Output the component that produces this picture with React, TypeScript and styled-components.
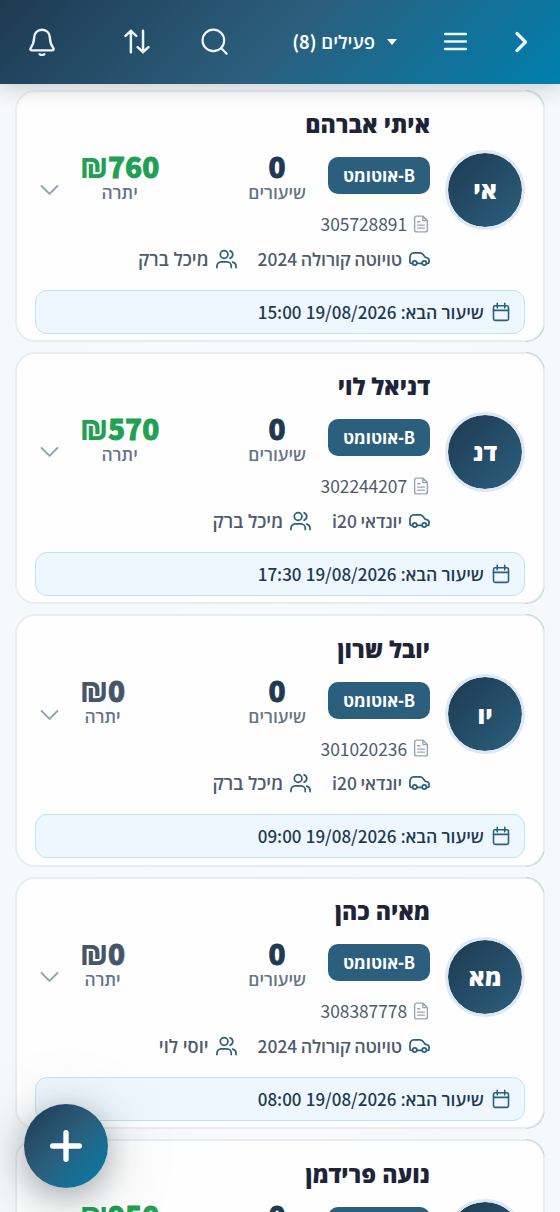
import React from "react";
import styled, { createGlobalStyle } from "styled-components";

const hebrew = `"Open Sans", "Noto Sans", sans-serif`;
const latin = `"Noto Sans CJK SC", "Open Sans", sans-serif`;

const GlobalStyle = createGlobalStyle`
  * { box-sizing: border-box; }
  html, body { margin: 0; height: 100%; overflow: hidden; }
  body { background: #f6fafc; font-family: ${hebrew}; color: #1e293b; }
`;

const Screen = styled.div`
  position: relative;
  height: 1212px;
  width: 560px;
  overflow: hidden;
  display: flex;
  flex-direction: column;
  background: linear-gradient(90deg, #f5f9fb, #f8fafc 50%, #f5f9fb);
`;

const Header = styled.header`
  position: relative;
  z-index: 1;
  flex: none;
  height: 83.5px;
  display: flex;
  align-items: center;
  padding: 0 27px 0 28px;
  color: #fff;
  background: linear-gradient(135deg, #1e3a52 0%, #2b5f7d 50%, #007fae 100%);
  box-shadow: 0 4px 20px rgba(15, 23, 42, 0.2);
`;

const IconButton = styled.button<{ $gap?: number }>`
  display: flex;
  padding: 0;
  border: 0;
  background: none;
  color: #eef6fc;
  margin-inline-start: ${(p) => p.$gap ?? 0}px;
`;

const Filter = styled.div`
  display: flex;
  align-items: center;
  gap: 12px;
  width: 107px;
  margin-inline-start: 46px;
  font-size: 18.5px;
  font-weight: 650;
  white-space: nowrap;
`;

const Num = styled.bdi<{ $size: number; $weight?: number; $track?: number }>`
  font-family: ${latin};
  font-size: ${(p) => p.$size}px;
  font-weight: ${(p) => p.$weight ?? 500};
  letter-spacing: ${(p) => p.$track ?? 0}px;
  line-height: 1;
`;

const Figure = styled(Num)`
  -webkit-text-stroke: 0.8px currentColor;
`;

const Shekel = styled.span`
  -webkit-text-stroke: 0;
`;

const List = styled.main`
  flex: 1;
  min-height: 0;
  display: flex;
  flex-direction: column;
  gap: 10px;
  padding: 6px 15px 0;
`;

const Card = styled.article`
  position: relative;
  flex: none;
  height: 252.4px;
  padding: 16.5px 18px 0;
  border: 2px solid #e9edf2;
  border-radius: 20px;
  background: #fefefe;

  &::after {
    content: "";
    position: absolute;
    inset: -2px -2px -2px auto;
    width: 18px;
    border: 1px solid #bcd3d1;
    border-left: 0;
    border-radius: 0 20px 20px 0;
    mask: linear-gradient(#000 14px, transparent 18px, transparent calc(100% - 18px), #000 calc(100% - 14px));
  }
`;

const Summary = styled.div`
  display: flex;
  align-items: center;
  height: 163px;
`;

const Avatar = styled.div`
  flex: none;
  width: 80px;
  height: 80px;
  border: 3px solid #dde8f3;
  border-radius: 50%;
  background: linear-gradient(135deg, #1e3a52, #2b5f7d);
  background-clip: padding-box;
  color: #fff;
  display: grid;
  place-items: center;
  font-size: 24px;
  font-weight: 800;
`;

const Info = styled.div`
  width: 350px;
  margin-inline-start: 15px;
  display: flex;
  flex-direction: column;
`;

const Name = styled.h2`
  margin: 0;
  height: 48px;
  line-height: 43px;
  font-size: 23.2px;
  font-weight: 800;
  color: #1e2438;
  white-space: nowrap;
`;

const Middle = styled.div`
  display: flex;
  align-items: center;
  height: 55px;
`;

const Pill = styled.span`
  display: flex;
  align-items: center;
  justify-content: center;
  width: 102px;
  height: 37px;
  margin-bottom: 6px;
  border-radius: 10px;
  background: #2b5f7d;
  color: #fff;
  font-size: 17px;
  font-weight: 700;
  white-space: nowrap;
`;

const Stat = styled.div<{ $push?: boolean; $tone: string }>`
  display: flex;
  flex-direction: column;
  align-items: center;
  margin-bottom: 2px;
  margin-inline-start: ${(p) => (p.$push ? "auto" : "22px")};
  color: ${(p) => p.$tone};
`;

const StatLabel = styled.span`
  color: #64748b;
  font-size: 17.4px;
  line-height: 24px;
  font-weight: 550;
`;

const Line = styled.div`
  display: flex;
  align-items: center;
  height: 35px;
  font-weight: 600;
  white-space: nowrap;
`;

const Tag = styled.span<{ $muted?: boolean; $gap?: number; $size?: number }>`
  display: flex;
  align-items: center;
  gap: ${(p) => p.$gap ?? 7}px;
  margin-inline-end: 21px;
  color: #4d5b70;
  font-size: ${(p) => p.$size ?? 17.8}px;
  svg { color: ${(p) => (p.$muted ? "#9aa5b4" : "#2b5f7d")}; }
`;

const CarName = styled.span`
  letter-spacing: -0.15px;
  word-spacing: -0.9px;
`;

const Next = styled.div`
  display: flex;
  align-items: center;
  gap: 7px;
  height: 44px;
  margin-top: 18.5px;
  padding: 0 13px;
  border: 1.5px solid #c0e3f0;
  border-radius: 12px;
  background: #eff7fe;
  color: #1e3a52;
  font-size: 17.6px;
  font-weight: 620;
  white-space: nowrap;
  word-spacing: -0.4px;
  svg { color: #2b5f7d; }
`;

const Expand = styled.span`
  margin-inline-start: auto;
  display: flex;
  color: #94a3b8;
  margin-left: 5px;
`;

const Fab = styled.button`
  position: absolute;
  z-index: 2;
  left: 24px;
  top: 1104px;
  width: 84px;
  height: 84px;
  border: 0;
  border-radius: 50%;
  display: grid;
  place-items: center;
  color: #fff;
  background: linear-gradient(135deg, #1e3a52 0%, #2b5f7d 50%, #007fae 100%);
  box-shadow: 0 8px 32px rgba(30, 42, 52, 0.36), 0 10px 80px rgba(30, 42, 52, 0.16);
`;

type IconProps = { size: number; stroke?: number; children: React.ReactNode };
const Icon = ({ size, stroke = 1.5, children }: IconProps) => (
  <svg width={size} height={size} viewBox="0 0 24 24" fill="none" stroke="currentColor"
    strokeWidth={stroke} strokeLinecap="round" strokeLinejoin="round">{children}</svg>
);

const Calendar = () => (
  <Icon size={20} stroke={1.9}>
    <rect x="3" y="4.500" width="18" height="17.500" rx="2" />
    <path d="M3 10h18M7.500 1.500v5.500M16.500 1.500v5.500" />
  </Icon>
);
const Doc = () => (
  <Icon size={18} stroke={1.9}>
    <path d="M14.500 1.500H6a2.500 2.500 0 0 0-2.500 2.500v16A2.500 2.500 0 0 0 6 22.500h12a2.500 2.500 0 0 0 2.500-2.500V7.500zM14.500 1.500v6h6M7.500 9h3M7.500 13.500h9M7.500 17.500h9" />
  </Icon>
);
const Car = () => (
  <svg width="21" height="16" viewBox="0 0 22 16" fill="none" stroke="currentColor" strokeWidth="1.8" strokeLinecap="round" strokeLinejoin="round">
    <path d="M3.500 12.500H2.200c-.8 0-1.200-.5-1.200-1.200V6.500C1 4 2.500 1.500 5 1.500h6.500c1.500 0 2.300.6 3 1.500l2.300 3 2.700.9c1 .4 1.500 1 1.500 2v2.500c0 .8-.5 1.100-1.200 1.100h-1M8.500 12.500h5" />
    <circle cx="6" cy="12.200" r="2.200" /><circle cx="16" cy="12.200" r="2.200" />
  </svg>
);
const People = () => (
  <svg width="21" height="20" viewBox="0 0 22 20" fill="none" stroke="currentColor" strokeWidth="1.8" strokeLinecap="round">
    <circle cx="8.500" cy="5.300" r="4" />
    <path d="M1 19v-1.500a4.500 4.500 0 0 1 4.500-4.500h6a4.500 4.500 0 0 1 4.500 4.500V19M14.800 1.500a4 4 0 0 1 0 7.600M17.500 13.200a4.500 4.500 0 0 1 3.500 4.300V19" />
  </svg>
);

type Student = {
  name: string; initials: string; id: string; carName: string; carNum: string;
  teacher: string; balance: string; owed?: boolean; time: string;
};

const students: Student[] = [
  { name: "איתי אברהם", initials: "אי", id: "305728891", carName: "טויוטה קורולה", carNum: "2024", teacher: "מיכל ברק", balance: "760", owed: true, time: "15:00" },
  { name: "דניאל לוי", initials: "דנ", id: "302244207", carName: "יונדאי", carNum: "i20", teacher: "מיכל ברק", balance: "570", owed: true, time: "17:30" },
  { name: "יובל שרון", initials: "יו", id: "301020236", carName: "יונדאי", carNum: "i20", teacher: "מיכל ברק", balance: "0", time: "09:00" },
  { name: "מאיה כהן", initials: "מא", id: "308387778", carName: "טויוטה קורולה", carNum: "2024", teacher: "יוסי לוי", balance: "0", time: "08:00" },
];

const lastStudent = { name: "נועה פרידמן", balance: "950" };

const Heading = ({ name, balance, owed }: { name: string; balance: string; owed?: boolean }) => (
  <>
    <Name>{name}</Name>
    <Middle>
      <Pill><span><Num $size={16.5} $weight={700}>B</Num>-אוטומט</span></Pill>
      <Stat $tone="#1e3a52">
        <Figure $size={28} $weight={900}>0</Figure>
        <StatLabel>שיעורים</StatLabel>
      </Stat>
      <Stat $push $tone={owed ? "#20a050" : "#475569"}>
        <Figure $size={28} $weight={900}><Shekel>₪</Shekel>{balance}</Figure>
        <StatLabel>יתרה</StatLabel>
      </Stat>
    </Middle>
  </>
);

const StudentCard = ({ s }: { s: Student }) => (
  <Card>
    <Summary>
      <Avatar>{s.initials}</Avatar>
      <Info>
        <Heading name={s.name} balance={s.balance} owed={s.owed} />
        <Line>
          <Tag $muted $gap={5}><Doc /><Num $size={17.4} $weight={400} $track={-0.05}>{s.id}</Num></Tag>
        </Line>
        <Line>
          <Tag><Car /><CarName>{s.carName} <Num $size={17.4}>{s.carNum}</Num></CarName></Tag>
          <Tag $size={18.2}><People />{s.teacher}</Tag>
        </Line>
      </Info>
      <Expand><Icon size={19} stroke={2.5}><path d="M2 7.500l10 10 10-10" /></Icon></Expand>
    </Summary>
    <Next>
      <Calendar />
      <span>שיעור הבא: <Num $size={17}>19/08/2026</Num> <Num $size={17}>{s.time}</Num></span>
    </Next>
  </Card>
);

const PartialCard = () => (
  <Card>
    <Summary>
      <Avatar />
      <Info>
        <Heading name={lastStudent.name} balance={lastStudent.balance} owed />
        <Line />
        <Line />
      </Info>
    </Summary>
  </Card>
);

export default function App() {
  return (
    <Screen dir="rtl">
      <GlobalStyle />
      <Header>
        <IconButton><Icon size={24} stroke={3.2}><path d="M8 3.500l8.500 8.500L8 20.500" /></Icon></IconButton>
        <IconButton $gap={41}><Icon size={25} stroke={2.3}><path d="M2 4.800h20M2 12h20M2 19.200h20" /></Icon></IconButton>
        <Filter>
          <svg width="10" height="6" viewBox="0 0 10 6" fill="currentColor"><path d="M0 0h10L5 6z" /></svg>
          <span>פעילים <Num $size={18} $weight={700}>(8)</Num></span>
        </Filter>
        <IconButton $gap={63}><Icon size={27} stroke={1.9}><circle cx="11" cy="11" r="9.600" /><path d="M18 18l4.800 4.800" /></Icon></IconButton>
        <IconButton $gap={51}><Icon size={27} stroke={2.2}><path d="M7 21.500V2.500M2.200 7L7 2.500l4.800 4.500M17.800 2.500v19M13 17l4.800 4.500 4.800-4.500" /></Icon></IconButton>
        <IconButton $gap={67}><Icon size={28} stroke={2}><path d="M12 1.500c4.200 0 6.500 3 6.700 6.700.2 4.500.8 6 3 9 .6 1.200.1 2-1 2H3.300c-1.100 0-1.600-.8-1-2 2.200-3 2.800-4.500 3-9 .2-3.700 2.500-6.700 6.700-6.700zM10 22.500q2 1.300 4 0" /></Icon></IconButton>
      </Header>
      <List>
        {students.map((s) => <StudentCard key={s.id} s={s} />)}
        <PartialCard />
      </List>
      <Fab><Icon size={32} stroke={4}><path d="M12 2v20M2 12h20" /></Icon></Fab>
    </Screen>
  );
}
